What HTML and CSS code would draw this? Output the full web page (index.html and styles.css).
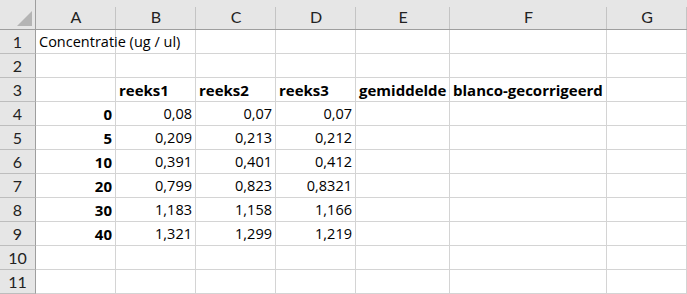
FILE: index.html
```html
<!DOCTYPE html>
<html lang="nl">
<head>
<meta charset="utf-8">
<title>Sheet</title>
<link rel="stylesheet" href="styles.css">
</head>
<body>
<div class="sheet">
  <div class="corner"><span class="tri"></span></div>
  <div class="ch">A</div><div class="ch">B</div><div class="ch">C</div><div class="ch">D</div><div class="ch">E</div><div class="ch">F</div><div class="ch">G</div>

  <div class="rh">1</div>
  <div class="c over">Concentratie (ug / ul)</div><div class="c"></div><div class="c"></div><div class="c"></div><div class="c"></div><div class="c"></div><div class="c"></div>

  <div class="rh">2</div>
  <div class="c"></div><div class="c"></div><div class="c"></div><div class="c"></div><div class="c"></div><div class="c"></div><div class="c"></div>

  <div class="rh">3</div>
  <div class="c"></div><div class="c b">reeks1</div><div class="c b">reeks2</div><div class="c b">reeks3</div><div class="c b">gemiddelde</div><div class="c b">blanco-gecorrigeerd</div><div class="c"></div>

  <div class="rh">4</div>
  <div class="c n b">0</div><div class="c n">0,08</div><div class="c n">0,07</div><div class="c n">0,07</div><div class="c"></div><div class="c"></div><div class="c"></div>

  <div class="rh">5</div>
  <div class="c n b">5</div><div class="c n">0,209</div><div class="c n">0,213</div><div class="c n">0,212</div><div class="c"></div><div class="c"></div><div class="c"></div>

  <div class="rh">6</div>
  <div class="c n b">10</div><div class="c n">0,391</div><div class="c n">0,401</div><div class="c n">0,412</div><div class="c"></div><div class="c"></div><div class="c"></div>

  <div class="rh">7</div>
  <div class="c n b">20</div><div class="c n">0,799</div><div class="c n">0,823</div><div class="c n">0,8321</div><div class="c"></div><div class="c"></div><div class="c"></div>

  <div class="rh">8</div>
  <div class="c n b">30</div><div class="c n">1,183</div><div class="c n">1,158</div><div class="c n">1,166</div><div class="c"></div><div class="c"></div><div class="c"></div>

  <div class="rh">9</div>
  <div class="c n b">40</div><div class="c n">1,321</div><div class="c n">1,299</div><div class="c n">1,219</div><div class="c"></div><div class="c"></div><div class="c"></div>

  <div class="rh">10</div>
  <div class="c"></div><div class="c"></div><div class="c"></div><div class="c"></div><div class="c"></div><div class="c"></div><div class="c"></div>

  <div class="rh">11</div>
  <div class="c"></div><div class="c"></div><div class="c"></div><div class="c"></div><div class="c"></div><div class="c"></div><div class="c"></div>
</div>
</body>
</html>
```
FILE: styles.css
```css
html, body {
  margin: 0;
  padding: 0;
  background: #ffffff;
  overflow: hidden;
}
.sheet {
  display: grid;
  grid-template-columns: 36px 80px 80px 80px 80px 94px 157px 80px;
  grid-template-rows: 30px repeat(11, 24px);
  width: 687px;
  font-family: "Open Sans", Lato, sans-serif;
  font-size: 14.5px;
  color: #000;
}
.corner {
  position: relative;
  background: #e6e6e6;
  border-right: 1px solid #9e9e9e;
  border-bottom: 1px solid #9e9e9e;
}
.tri {
  position: absolute;
  right: 3px;
  bottom: 3px;
  width: 0;
  height: 0;
  border-left: 15px solid transparent;
  border-bottom: 15px solid #b4b4b4;
}
.ch {
  background: #e6e6e6;
  border-bottom: 1px solid #9e9e9e;
  box-shadow: inset -1px 0 0 #c4c4c4;
  display: flex;
  align-items: center;
  justify-content: center;
  padding-top: 4px;
  color: #222;
  font-family: Lato, sans-serif;
  font-size: 16px;
  position: relative;
}
.ch::after {
  content: "";
  position: absolute;
  right: 0;
  top: 0;
  height: 7px;
  width: 1px;
  background: #e6e6e6;
}
.rh {
  background: #e6e6e6;
  border-right: 1px solid #9e9e9e;
  border-bottom: 1px solid #bdbdbd;
  display: flex;
  align-items: center;
  justify-content: center;
  color: #222;
  font-family: Lato, sans-serif;
  font-size: 16px;
}
.c {
  border-right: 1px solid #d4d4d4;
  border-bottom: 1px solid #d4d4d4;
  display: flex;
  align-items: center;
  padding: 0 3px;
  white-space: nowrap;
  min-width: 0;
}
.over {
  overflow: visible;
  position: relative;
  z-index: 1;
}
.n {
  justify-content: flex-end;
}
.b {
  font-weight: 700;
  font-size: 15px;
}
```
